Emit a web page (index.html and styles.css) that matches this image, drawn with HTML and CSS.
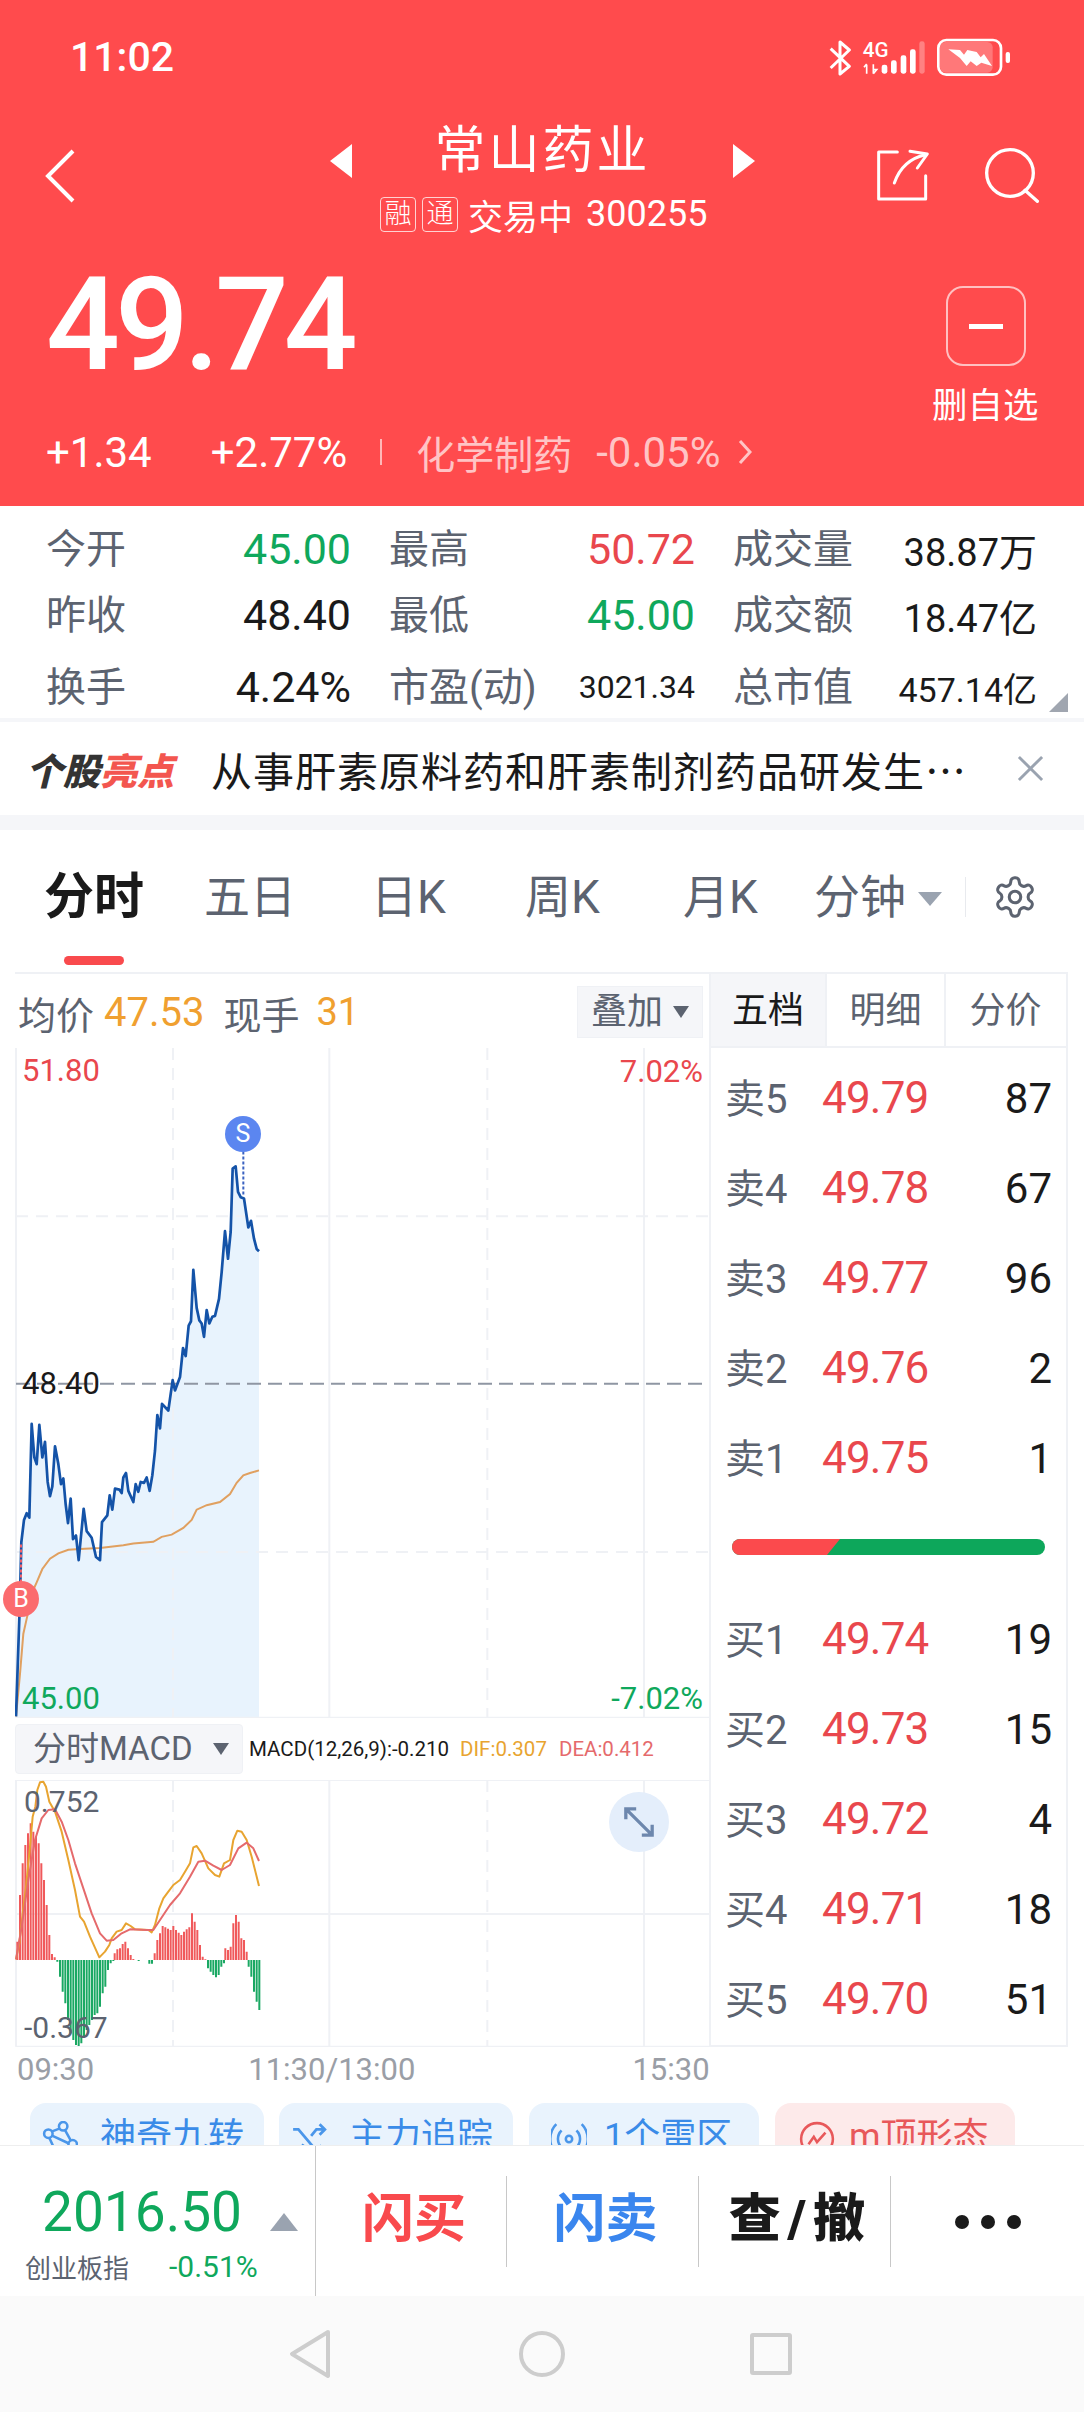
FILE: index.html
```html
<!DOCTYPE html>
<html lang="zh-CN">
<head>
	<meta charset="UTF-8">
	<title>常山药业</title>
	<link rel="stylesheet" href="styles.css">
</head>
<body>
	<div class="page">
		<div class="header">
			<div class="status">
				<span class="clock">11:02</span>
				<svg class="status-icons" viewBox="207 48 543 114">
					<path d="M212 80 L268 133 L240 156 V60 L268 84 L212 138" fill="none" stroke="#fff" stroke-width="9" stroke-linejoin="round"/>
					<text x="308" y="104" class="net">4G</text>
					<path d="M320 128 V155 M312 136 L320 126 M340 127 V155 M340 155 L350 143 H340" fill="none" stroke="#fff" stroke-width="5"/>
					<g fill="#fff">
						<rect x="365" y="128" width="17" height="27" rx="7"/>
						<rect x="393" y="115" width="17" height="40" rx="7"/>
						<rect x="422" y="100" width="17" height="55" rx="7"/>
						<rect x="450" y="82" width="17" height="73" rx="7"/>
						<rect x="478" y="58" width="16" height="97" rx="7" opacity=".3"/>
						<rect x="540" y="60" width="158" height="92" rx="16" opacity=".25"/>
						<rect x="737" y="90" width="13" height="33" rx="6"/>
						<path d="M565 82 L600 84 L612 98 L622 84 L650 90 L662 106 L672 96 L696 132 L664 122 L650 132 L632 118 L620 132 L600 108 Z"/>
					</g>
					<rect x="535" y="54" width="188" height="104" rx="24" fill="none" stroke="#fff" stroke-width="8"/>
				</svg>
			</div>
			<div class="nav">
				<svg class="back" viewBox="0 0 30 54"><path d="M28 2 L3 27 L28 52" fill="none" stroke="#fff" stroke-width="4"/></svg>
				<div class="nav-mid">
					<div class="title-row">
						<i class="arrow-left"></i>
						<span class="title">常山药业</span>
						<i class="arrow-right"></i>
					</div>
					<div class="sub-row">
						<span class="tag">融</span>
						<span class="tag">通</span>
						<span class="sub-state">交易中</span>
						<span class="sub-code">300255</span>
					</div>
				</div>
				<svg class="actions" viewBox="345 385 495 165">
					<g fill="none" stroke="#fff" stroke-width="9" stroke-linecap="round" stroke-linejoin="round">
						<path d="M412 397 H356 V538 H497 V468"/>
						<path d="M403 490 C420 440 450 415 497 405"/>
						<path d="M450 395 L502 403 L472 445"/>
						<circle cx="750" cy="460" r="70" stroke-width="10"/>
						<path d="M795 512 L832 545" stroke-width="10"/>
					</g>
				</svg>
			</div>
			<div class="quote">
				<div class="quote-left">
					<div class="price">49.74</div>
					<div class="change-row">
						<span>+1.34</span>
						<span class="pct">+2.77%</span>
						<i class="bar"></i>
						<span class="sector">化学制药</span>
						<span class="sector-pct">-0.05%</span>
						<svg class="more" viewBox="0 0 14 26"><path d="M2 2 L12 13 L2 24" fill="none" stroke="#ffc4c5" stroke-width="3"/></svg>
					</div>
				</div>
				<div class="quote-right">
					<div class="fav"><i></i></div>
					<div class="fav-label">删自选</div>
				</div>
			</div>
		</div>

		<div class="stats">
			<div class="stat-row">
				<span class="k">今开</span><span class="v green">45.00</span>
				<span class="k">最高</span><span class="v red">50.72</span>
				<span class="k">成交量</span><span class="v size38">38.87万</span>
			</div>
			<div class="stat-row">
				<span class="k">昨收</span><span class="v">48.40</span>
				<span class="k">最低</span><span class="v green">45.00</span>
				<span class="k">成交额</span><span class="v size38">18.47亿</span>
			</div>
			<div class="stat-row stat-last">
				<span class="k">换手</span><span class="v">4.24%</span>
				<span class="k">市盈(动)</span><span class="v size32">3021.34</span>
				<span class="k">总市值</span><span class="v size34">457.14亿</span>
			</div>
			<i class="corner"></i>
		</div>

		<div class="notice">
			<span class="notice-logo">个股<b>亮点</b></span>
			<span class="notice-text">从事肝素原料药和肝素制剂药品研发生…</span>
			<svg class="notice-close" viewBox="0 0 28 28"><path d="M2 2 L26 26 M26 2 L2 26" stroke="#9aa3b0" stroke-width="3"/></svg>
		</div>

		<div class="tabs">
			<div class="tab-row">
				<span class="tab on">分时</span>
				<span class="tab">五日</span>
				<span class="tab">日K</span>
				<span class="tab">周K</span>
				<span class="tab">月K</span>
				<span class="tab tab-min">分钟<i class="tri"></i></span>
				<i class="tab-sep"></i>
				<svg class="gear" viewBox="0 0 24 24" fill="none" stroke="#5c6370" stroke-width="1.6">
					<path d="M12.22 2h-.44a2 2 0 0 0-2 2v.18a2 2 0 0 1-1 1.73l-.43.25a2 2 0 0 1-2 0l-.15-.08a2 2 0 0 0-2.73.73l-.22.38a2 2 0 0 0 .73 2.73l.15.1a2 2 0 0 1 1 1.72v.51a2 2 0 0 1-1 1.74l-.15.09a2 2 0 0 0-.73 2.73l.22.38a2 2 0 0 0 2.73.73l.15-.08a2 2 0 0 1 2 0l.43.25a2 2 0 0 1 1 1.73V20a2 2 0 0 0 2 2h.44a2 2 0 0 0 2-2v-.18a2 2 0 0 1 1-1.73l.43-.25a2 2 0 0 1 2 0l.15.08a2 2 0 0 0 2.73-.73l.22-.39a2 2 0 0 0-.73-2.73l-.15-.08a2 2 0 0 1-1-1.74v-.5a2 2 0 0 1 1-1.74l.15-.09a2 2 0 0 0 .73-2.73l-.22-.38a2 2 0 0 0-2.73-.73l-.15.08a2 2 0 0 1-2 0l-.43-.25a2 2 0 0 1-1-1.73V4a2 2 0 0 0-2-2z"/>
					<circle cx="12" cy="12" r="3"/>
				</svg>
			</div>
			<div class="tab-line"></div>
		</div>

		<div class="market">
			<div class="left-col">
				<div class="chart-head">
					<span class="gray">均价</span><span class="orange avg">47.53</span>
					<span class="gray now">现手</span><span class="orange lot">31</span>
					<span class="overlay">叠加<i class="tri-dark"></i></span>
				</div>
				<div class="price-chart">
					<svg viewBox="45 17.92 2082 1500.8" preserveAspectRatio="none">
						<polygon class="area" points="48,1515 60,1250 64,1125 72,1075 80,1060 88,1070 95,860 103,935 110,950 118,862 127,935 135,900 143,990 150,1022 157,1000 165,910 175,950 183,995 190,982 197,1040 204,1082 212,1027 219,1118 228,1110 236,1165 251,1050 260,1100 275,1115 288,1158 300,1165 306,1080 322,1065 329,1020 337,1052 345,1005 358,1007 365,1015 370,980 378,970 385,1010 400,1035 407,995 415,1012 422,990 432,992 440,980 449,1010 457,975 465,920 472,840 480,870 486,815 505,830 518,762 525,785 540,755 549,690 557,708 566,640 573,630 580,515 590,600 598,628 605,635 612,665 620,605 628,635 637,620 645,618 657,580 665,520 675,428 684,490 692,430 698,288 707,283 714,340 722,352 732,355 745,420 753,405 762,445 770,468 777,473 777,1518 48,1518"/>
						<g class="grid">
							<path d="M48 18 V1518 M48 1518 H2127 M988 18 V1518 M1932 18 V1518"/>
							<path class="dash" d="M519 18 V1518 M1462 18 V1518 M48 395 H2127 M48 1147 H2127"/>
						</g>
						<path class="mid" d="M48 770 H2127"/>
						<polyline class="avg-line" points="48,1515 60,1420 70,1330 82,1290 95,1240 110,1215 127,1185 150,1162 175,1150 205,1142 240,1140 300,1138 370,1132 400,1128 460,1124 485,1113 515,1108 550,1093 575,1075 590,1052 620,1042 660,1035 690,1017 710,992 730,975 750,970 777,964"/>
						<polyline class="price-line" points="48,1515 60,1250 64,1125 72,1075 80,1060 88,1070 95,860 103,935 110,950 118,862 127,935 135,900 143,990 150,1022 157,1000 165,910 175,950 183,995 190,982 197,1040 204,1082 212,1027 219,1118 228,1110 236,1165 251,1050 260,1100 275,1115 288,1158 300,1165 306,1080 322,1065 329,1020 337,1052 345,1005 358,1007 365,1015 370,980 378,970 385,1010 400,1035 407,995 415,1012 422,990 432,992 440,980 449,1010 457,975 465,920 472,840 480,870 486,815 505,830 518,762 525,785 540,755 549,690 557,708 566,640 573,630 580,515 590,600 598,628 605,635 612,665 620,605 628,635 637,620 645,618 657,580 665,520 675,428 684,490 692,430 698,288 707,283 714,340 722,352 732,355 745,420 753,405 762,445 770,468 777,473"/>
						<path class="dot-red" d="M63 1130 V1215"/>
						<path class="dot-blue" d="M730 250 V350"/>
					</svg>
					<span class="axis tl red">51.80</span>
					<span class="axis tr red">7.02%</span>
					<span class="axis ml">48.40</span>
					<span class="axis bl green">45.00</span>
					<span class="axis br green">-7.02%</span>
					<span class="mark mark-b">B</span>
					<span class="mark mark-s">S</span>
				</div>
				<div class="macd-head">
					<span class="macd-btn">分时MACD<i class="tri-dark"></i></span>
					<span class="macd-val">MACD(12,26,9):-0.210</span>
					<span class="macd-val dif">DIF:0.307</span>
					<span class="macd-val dea">DEA:0.412</span>
				</div>
				<div class="macd-chart">
					<svg viewBox="45 240 2082 801">
						<g class="grid3">
							<path d="M48 240 V1040 M48 240 H2127 M48 642 H2127 M48 1040 H2127 M988 240 V1040 M1932 240 V1040"/>
							<path class="dash3" d="M519 240 V1040 M1462 240 V1040"/>
						</g>
						<path class="bars-red" d="M52 780V725M60 780V585M68 780V490M76 780V435M84 780V400M92 780V370M100 780V395M108 780V410M116 780V430M124 780V490M132 780V540M140 780V615M148 780V705M156 780V762M164 780V772M344 780V760M352 780V748M360 780V745M368 780V732M376 780V725M384 780V745M392 780V765M400 780V777M464 780V760M472 780V720M480 780V700M488 780V678M496 780V682M504 780V686M512 780V690M520 780V678M528 780V690M536 780V698M544 780V705M552 780V695M560 780V688M568 780V682M576 780V640M584 780V665M592 780V690M600 780V735M608 780V770M616 780V778M676 780V745M684 780V750M692 780V740M700 780V670M708 780V645M716 780V665M724 780V715M732 780V720M740 780V755"/>
						<path class="bars-green" d="M172 780V785M180 780V830M188 780V875M196 780V910M204 780V960M212 780V1000M220 780V1020M228 780V1035M236 780V1038M244 780V1030M252 780V1010M260 780V990M268 780V975M276 780V960M284 780V945M292 780V940M300 780V920M308 780V880M316 780V860M324 780V810M332 780V790M340 780V783M416 780V783M448 780V791M456 780V791M624 780V805M632 780V815M640 780V825M648 780V832M656 780V825M664 780V800M672 780V790M746 780V800M754 780V830M762 780V875M770 780V905M778 780V930"/>
						<polyline class="dif-line" points="48,778 58,730 68,640 78,560 90,440 98,350 106,320 112,270 120,247 130,245 138,260 148,305 165,335 185,395 205,480 225,570 240,650 252,665 270,710 298,772 315,755 328,735 335,715 350,695 365,690 378,670 392,678 405,688 445,690 455,697 465,675 478,625 490,595 505,575 520,555 540,540 555,515 570,490 580,442 590,438 605,460 625,505 645,525 658,530 672,490 690,480 700,420 712,392 725,395 740,420 755,470 777,558"/>
						<polyline class="dea-line" points="48,778 65,680 85,540 105,420 125,355 145,330 165,328 185,365 205,420 225,490 250,565 275,640 300,700 320,722 340,720 365,700 390,688 440,690 460,690 480,660 510,615 540,580 570,530 595,485 615,482 640,497 665,510 690,495 715,445 740,428 760,445 777,483"/>
					</svg>
					<span class="macd-top">0.752</span>
					<span class="macd-low">-0.367</span>
					<span class="expand">
						<svg viewBox="0 0 34 34"><path d="M3 14 V3 H14 M3 3 L31 31 M31 20 V31 H20" fill="none" stroke="#6d87ad" stroke-width="3.5"/></svg>
					</span>
				</div>
			</div>
			<div class="book">
				<div class="book-tabs">
					<span class="book-tab on">五档</span>
					<span class="book-tab">明细</span>
					<span class="book-tab">分价</span>
				</div>
				<div class="book-row"><span class="lv">卖5</span><span class="bp">49.79</span><span class="bq">87</span></div>
				<div class="book-row"><span class="lv">卖4</span><span class="bp">49.78</span><span class="bq">67</span></div>
				<div class="book-row"><span class="lv">卖3</span><span class="bp">49.77</span><span class="bq">96</span></div>
				<div class="book-row"><span class="lv">卖2</span><span class="bp">49.76</span><span class="bq">2</span></div>
				<div class="book-row"><span class="lv">卖1</span><span class="bp">49.75</span><span class="bq">1</span></div>
				<div class="ratio"><svg viewBox="0 0 313 16"><rect width="313" height="16" rx="8" fill="#0da75b"/><path d="M8 0 H108 L95 16 H8 A8 8 0 0 1 8 0 Z" fill="#fb4a4d"/></svg></div>
				<div class="book-row"><span class="lv">买1</span><span class="bp">49.74</span><span class="bq">19</span></div>
				<div class="book-row"><span class="lv">买2</span><span class="bp">49.73</span><span class="bq">15</span></div>
				<div class="book-row"><span class="lv">买3</span><span class="bp">49.72</span><span class="bq">4</span></div>
				<div class="book-row"><span class="lv">买4</span><span class="bp">49.71</span><span class="bq">18</span></div>
				<div class="book-row"><span class="lv">买5</span><span class="bp">49.70</span><span class="bq">51</span></div>
			</div>
		</div>

		<div class="times">
			<span>09:30</span>
			<span class="t-mid">11:30/13:00</span>
			<span class="t-end">15:30</span>
		</div>

		<div class="chips">
			<div class="chip chip1">
				<svg viewBox="0 0 34 34" fill="none" stroke="#4a96ea" stroke-width="2.4"><circle cx="6" cy="12" r="4"/><circle cx="20" cy="5" r="4"/><circle cx="29" cy="22" r="4"/><circle cx="14" cy="30" r="3"/><path d="M9 10 L17 7 M22 9 L27 18 M7 16 L12 27 M10 14 L25 21"/></svg>
				<span>神奇九转</span>
			</div>
			<div class="chip chip2">
				<svg viewBox="0 0 34 34" fill="none" stroke="#4a96ea" stroke-width="2.6"><path d="M2 8 H7 L24 28 H31 M2 28 H7 L12 22 M19 14 L24 8 H31 M27 3 L32 8 L27 13 M27 23 L32 28 L27 33"/></svg>
				<span>主力追踪</span>
			</div>
			<div class="chip chip3">
				<svg viewBox="0 0 34 34" fill="none" stroke="#4a96ea" stroke-width="2.4"><circle cx="17" cy="17" r="3"/><path d="M10 9 A11 11 0 0 0 10 25 M24 9 A11 11 0 0 1 24 25 M5 3 A20 20 0 0 0 5 31 M29 3 A20 20 0 0 1 29 31"/></svg>
				<span>1个雷区</span>
			</div>
			<div class="chip chip4">
				<svg viewBox="0 0 34 34" fill="none" stroke="#e8585a" stroke-width="2.4"><circle cx="17" cy="17" r="15"/><path d="M9 22 L14 15 L17 20 L25 11"/></svg>
				<span>m顶形态</span>
			</div>
		</div>

		<div class="bottom">
			<div class="index">
				<div class="index-top"><span class="index-num">2016.50</span><i class="index-tri"></i></div>
				<div class="index-sub"><span class="index-name">创业板指</span><span class="index-pct">-0.51%</span></div>
			</div>
			<div class="btns">
				<span class="btn btn-buy">闪买</span>
				<span class="btn btn-sell">闪卖</span>
				<span class="btn btn-query">查/撤</span>
				<span class="btn btn-more"><i></i><i></i><i></i></span>
			</div>
		</div>

		<div class="sysnav">
			<svg class="sys-back" viewBox="0 0 44 50"><path d="M40 3 L4 25 L40 47 Z" fill="none" stroke="#cdcdcd" stroke-width="4" stroke-linejoin="round"/></svg>
			<i class="sys-home"></i>
			<i class="sys-recent"></i>
		</div>
	</div>
</body>
</html>
```

FILE: styles.css
```css
*{
	padding: 0;
	margin: 0;
	box-sizing: border-box;
}
i{
	font-style: normal;
	display: block;
}
svg{
	display: block;
}
body{
	width: 1084px;
	background: #fff;
	font-family: Roboto, "Noto Sans CJK SC", sans-serif;
	color: #1a1a1a;
	overflow-x: hidden;
}
.page{
	width: 1084px;
	height: 2412px;
	overflow: hidden;
}
.red{ color: #e9474d; }
.green{ color: #0fa85c; }
.gray{ color: #5c6370; }
.orange{ color: #f0a030; }

/* header */
.header{
	height: 506px;
	background: #ff4b4d;
	color: #fff;
}
.status{
	height: 114px;
	padding: 0 74px 0 70px;
	display: flex;
	align-items: center;
	justify-content: space-between;
}
.clock{
	font-size: 41px;
	font-weight: 500;
}
.status-icons{
	width: 181px;
	height: 38px;
}
.net{
	font-family: Roboto, sans-serif;
	font-size: 62px;
	font-weight: 500;
	fill: #fff;
}
.nav{
	height: 138px;
	display: flex;
	padding: 0 44px 0 45px;
}
.back{
	width: 30px;
	height: 54px;
	margin-top: 35px;
}
.nav-mid{
	width: 425px;
	margin-left: 255px;
}
.title-row{
	height: 68px;
	display: flex;
	justify-content: space-between;
}
.title{
	font-size: 51px;
	line-height: 74px;
	letter-spacing: 3px;
}
.arrow-left, .arrow-right{
	width: 0;
	height: 0;
	margin-top: 30px;
	border-top: 17px solid transparent;
	border-bottom: 17px solid transparent;
}
.arrow-left{ border-right: 22px solid #fff; }
.arrow-right{ border-left: 22px solid #fff; }
.sub-row{
	height: 64px;
	display: flex;
	align-items: center;
	margin-left: 50px;
}
.tag{
	width: 36px;
	height: 35px;
	margin-right: 6px;
	border: 1px solid rgba(255,255,255,.75);
	border-radius: 4px;
	font-size: 27px;
	line-height: 32px;
	text-align: center;
	font-weight: 300;
}
.sub-state{
	font-size: 35px;
	margin-left: 4px;
}
.sub-code{
	font-size: 36px;
	margin-left: 13px;
}
.actions{
	width: 165px;
	height: 55px;
	margin-top: 34px;
	margin-left: auto;
}
.quote{
	height: 254px;
	display: flex;
	justify-content: space-between;
	padding: 0 45px 0 46px;
}
.price{
	height: 140px;
	font-size: 130px;
	font-weight: 500;
	line-height: 146px;
	letter-spacing: -5px;
}
.change-row{
	margin-top: 30px;
	height: 60px;
	display: flex;
	align-items: center;
	font-size: 42px;
}
.pct{ margin-left: 59px; }
.bar{
	width: 2px;
	height: 26px;
	margin-left: 33px;
	background: rgba(255,255,255,.6);
}
.sector{
	margin-left: 34px;
	font-size: 39px;
	color: #ffc4c5;
}
.sector-pct{
	margin-left: 24px;
	color: #ffc4c5;
}
.more{
	width: 14px;
	height: 26px;
	margin-left: 18px;
}
.quote-right{
	width: 107px;
	padding-top: 34px;
}
.fav{
	width: 80px;
	height: 80px;
	margin: 0 auto;
	border: 2px solid rgba(255,255,255,.65);
	border-radius: 17px;
	display: flex;
	align-items: center;
	justify-content: center;
}
.fav i{
	width: 34px;
	height: 5px;
	background: #fff;
}
.fav-label{
	margin-top: 20px;
	font-size: 35.5px;
	line-height: 40px;
	white-space: nowrap;
}

/* stats */
.stats{
	position: relative;
	height: 212px;
	padding-top: 10px;
}
.stat-row{
	height: 66px;
	padding: 0 47px 0 46px;
	display: grid;
	grid-template-columns: 120px 185px 190px 154px 162px 180px;
	align-items: center;
}
.stat-last{
	margin-top: 8px;
	height: 62px;
}
.k{
	font-size: 40px;
	color: #5c6370;
	white-space: nowrap;
	line-height: 50px;
	margin-top: 2px;
}
.k:nth-child(3), .k:nth-child(5){
	padding-left: 38px;
}
.v{
	font-size: 43px;
	text-align: right;
	white-space: nowrap;
}
.size38{ font-size: 38px; }
.size34{ font-size: 34px; }
.size32{ font-size: 32px; }
.corner{
	position: absolute;
	right: 16px;
	bottom: 6px;
	width: 0;
	height: 0;
	border-left: 19px solid transparent;
	border-bottom: 19px solid #a0a6b0;
}
.notice{
	height: 97px;
	border-top: 4px solid #f5f6f9;
	padding: 0 40px 0 26px;
	display: flex;
	align-items: center;
}
.notice-logo{
	width: 185px;
	font-size: 37px;
	font-weight: 900;
	font-style: italic;
	color: #333;
}
.notice-logo b{
	color: #f3564f;
	font-weight: 900;
}
.notice-text{
	font-family: "Noto Sans CJK SC", sans-serif;
	font-size: 41px;
	letter-spacing: 1px;
	white-space: nowrap;
	width: 806px;
	color: #1a1a1a;
}
.notice-close{
	width: 27px;
	height: 27px;
}

/* period tabs */
.tabs{
	border-top: 15px solid #f5f6f9;
	height: 157px;
	padding-top: 42px;
}
.tab-row{
	height: 50px;
	padding-left: 44px;
	display: grid;
	grid-template-columns: 160px 167px 154px 158px 131px 151px 1px 44px;
	align-items: center;
}
.tab{
	font-size: 46px;
	color: #5c6370;
	line-height: 50px;
	white-space: nowrap;
}
.tab.on{
	font-size: 50px;
	font-weight: 700;
	color: #1a1a1a;
}
.tab-min{
	display: flex;
	align-items: center;
}
.tri{
	width: 0;
	height: 0;
	margin: 4px 0 0 12px;
	border-left: 12px solid transparent;
	border-right: 12px solid transparent;
	border-top: 14px solid #9aa3b0;
}
.tab-sep{
	width: 1px;
	height: 40px;
	background: #e8eaee;
}
.gear{
	width: 46px;
	height: 46px;
	margin-left: 26px;
}
.tab-line{
	width: 60px;
	height: 9px;
	margin: 34px 0 0 64px;
	border-radius: 5px;
	background: #f94a4d;
}

/* chart + order book */
.market{
	display: flex;
	margin: 0 16px 0 15px;
	height: 1075px;
}
.left-col{
	width: 694px;
}
.chart-head{
	height: 76px;
	border-top: 2px solid #eff1f5;
	display: flex;
	align-items: center;
	padding: 2px 0 0 3px;
	font-size: 38px;
}
.avg{ margin-left: 10px; font-size: 40px; }
.now{ margin-left: 19px; }
.lot{ margin-left: 17px; font-size: 38px; }
.overlay{
	margin-left: auto;
	margin-right: 6px;
	width: 126px;
	height: 52px;
	padding-left: 13px;
	background: #f5f6f9;
	border: 1px solid #eff1f5;
	color: #5c6370;
	font-size: 36px;
	line-height: 50px;
	display: flex;
	align-items: center;
}
.tri-dark{
	width: 0;
	height: 0;
	margin-left: 10px;
	border-left: 8px solid transparent;
	border-right: 8px solid transparent;
	border-top: 12px solid #5c6370;
}
.price-chart{
	position: relative;
	height: 670px;
}
.price-chart svg{
	width: 694px;
	height: 670px;
}
.area{ fill: #e8f3fd; }
.grid path{
	fill: none;
	stroke: #eff1f5;
	stroke-width: 2;
	vector-effect: non-scaling-stroke;
}
.grid .dash{ stroke-dasharray: 12 8; }
.mid{
	fill: none;
	stroke: #8f96a3;
	stroke-width: 2;
	stroke-dasharray: 14 7;
	vector-effect: non-scaling-stroke;
}
.avg-line{
	fill: none;
	stroke: #e0a060;
	stroke-width: 2;
	vector-effect: non-scaling-stroke;
}
.price-line{
	fill: none;
	stroke: #1453a8;
	stroke-width: 2.7;
	stroke-linejoin: round;
	vector-effect: non-scaling-stroke;
}
.dot-red, .dot-blue{
	fill: none;
	stroke-width: 2;
	stroke-dasharray: 3 2;
	vector-effect: non-scaling-stroke;
}
.dot-red{ stroke: #f0606a; }
.dot-blue{ stroke: #3a62c0; }
.axis{
	position: absolute;
	font-size: 31px;
	line-height: 36px;
}
.tl{ left: 7px; top: 5px; }
.tr{ right: 6px; top: 6px; }
.ml{ left: 7px; top: 318px; }
.bl{ left: 7px; top: 633px; }
.br{ right: 6px; top: 633px; }
.mark{
	position: absolute;
	width: 36px;
	height: 36px;
	border-radius: 50%;
	color: #fff;
	font-size: 25px;
	line-height: 36px;
	text-align: center;
}
.mark-b{ left: -12px; top: 533px; background: #fb6b6e; }
.mark-s{ left: 210px; top: 68px; background: #5b86f0; }
.macd-head{
	height: 62px;
	display: flex;
	align-items: center;
}
.macd-btn{
	width: 228px;
	height: 50px;
	padding-left: 17px;
	background: #f5f6f9;
	border: 1px solid #eff1f5;
	border-radius: 4px;
	color: #5c6370;
	font-size: 33px;
	line-height: 48px;
	display: flex;
	align-items: center;
	white-space: nowrap;
}
.macd-btn .tri-dark{ margin-left: 20px; }
.macd-val{
	font-size: 20.5px;
	margin-left: 6px;
	white-space: nowrap;
}
.dif{ color: #e8a430; margin-left: 11px; }
.dea{ color: #e56a6c; margin-left: 12px; }
.macd-chart{
	position: relative;
	height: 267px;
}
.macd-chart svg{
	width: 694px;
	height: 267px;
}
.grid3 path{
	fill: none;
	stroke: #eff1f5;
	stroke-width: 6;
}
.grid3 .dash3{ stroke-dasharray: 36 24; }
.bars-red, .bars-green{
	fill: none;
	stroke-width: 6;
}
.bars-red{ stroke: #f0595b; }
.bars-green{ stroke: #1aa863; }
.dif-line, .dea-line{
	fill: none;
	stroke-width: 6;
	stroke-linejoin: round;
}
.dif-line{ stroke: #e8a430; }
.dea-line{ stroke: #e56a6c; }
.macd-top, .macd-low{
	position: absolute;
	left: 9px;
	font-size: 30px;
	line-height: 36px;
	color: #5c6370;
}
.macd-top{ top: 4px; }
.macd-low{ top: 230px; }
.expand{
	position: absolute;
	left: 594px;
	top: 12px;
	width: 60px;
	height: 60px;
	border-radius: 50%;
	background: #e4eefb;
	padding: 14px;
}
.expand svg{
	width: 32px;
	height: 32px;
}
.book{
	width: 359px;
	height: 1075px;
	border: 2px solid #eff1f5;
}
.book-tabs{
	height: 74px;
	display: flex;
	border-bottom: 2px solid #eff1f5;
}
.book-tab{
	width: 119px;
	font-size: 36px;
	line-height: 75px;
	text-align: center;
	color: #5c6370;
	border-right: 2px solid #eff1f5;
}
.book-tab.on{
	width: 116px;
	background: #f5f6f9;
	color: #1a1a1a;
}
.book-tab:last-child{ border-right: 0; }
.book-row{
	height: 90px;
	padding: 0 14px;
	display: flex;
	align-items: center;
}
.book-row:nth-child(2){ margin-top: 5px; }
.lv{
	width: 97px;
	font-size: 40px;
	color: #5c6370;
	white-space: nowrap;
	margin-bottom: 4px;
}
.bp{
	width: 108px;
	font-size: 44px;
	letter-spacing: -.8px;
	color: #e9474d;
}
.bq{
	flex: 1;
	font-size: 42px;
	text-align: right;
}
.ratio{
	height: 91px;
	padding: 36px 0 0 21px;
}
.ratio svg{
	width: 313px;
	height: 16px;
}
.times{
	height: 44px;
	padding-left: 17px;
	display: flex;
	align-items: center;
	font-size: 31px;
	color: #9a9ea6;
}
.t-mid{ margin-left: 154px; }
.t-end{ margin-left: 217px; }

/* signal chips, cut off by the bottom bar */
.chips{
	height: 54px;
	padding: 12px 0 0 30px;
	display: flex;
	overflow: hidden;
}
.chip{
	width: 234px;
	height: 80px;
	flex: none;
	margin-right: 15px;
	border-radius: 16px;
	background: #e9f3fd;
	color: #3a8be8;
	font-size: 36px;
	line-height: 44px;
	padding: 12px 0 0 12px;
	display: flex;
	align-items: flex-start;
	white-space: nowrap;
}
.chip svg{
	width: 36px;
	height: 36px;
	margin: 6px 22px 0 0;
	flex: none;
}
.chip2{ margin-right: 16px; }
.chip3{ width: 230px; padding-left: 22px; margin-right: 16px; }
.chip3 svg{ margin-right: 17px; }
.chip4{
	width: 240px;
	background: #fdeaea;
	color: #e8585a;
	padding-left: 24px;
}
.chip4 svg{ margin-right: 14px; }

/* bottom bar */
.bottom{
	height: 151px;
	border-top: 1px solid #eeeeee;
	display: flex;
	background: #fff;
}
.index{
	width: 316px;
	border-right: 1px solid #c8c8c8;
	padding-left: 25px;
}
.index-top{
	height: 95px;
	padding: 31px 0 0 17px;
	display: flex;
}
.index-num{
	font-size: 55px;
	line-height: 70px;
	color: #0fa85c;
}
.index-tri{
	width: 0;
	height: 0;
	margin: 36px 0 0 28px;
	border-left: 14px solid transparent;
	border-right: 14px solid transparent;
	border-bottom: 18px solid #9aa3b0;
}
.index-sub{
	margin-top: 7px;
	display: flex;
	align-items: center;
}
.index-name{
	width: 144px;
	font-size: 26px;
	color: #5c6370;
}
.index-pct{
	font-size: 30px;
	color: #0fa85c;
}
.btns{
	flex: 1;
	display: grid;
	grid-template-columns: 191px 192px 192px 1fr;
	height: 91px;
	margin-top: 30px;
}
.btn{
	font-size: 52px;
	font-weight: 700;
	line-height: 88px;
	padding-left: 6px;
	text-align: center;
	border-right: 1px solid #c8c8c8;
	white-space: nowrap;
}
.btn-buy{ color: #f94a4d; }
.btn-sell{ color: #3a86ee; }
.btn-query{
	font-weight: 900;
	letter-spacing: 7px;
	padding-left: 12px;
}
.btn-more{
	border-right: 0;
	padding-left: 0;
	display: flex;
	align-items: center;
	justify-content: center;
	gap: 12px;
}
.btn-more i{
	width: 14px;
	height: 14px;
	border-radius: 50%;
	background: #1a1a1a;
}
.sysnav{
	height: 116px;
	background: #fafafa;
	display: flex;
	align-items: center;
	padding-left: 288px;
}
.sys-back{
	width: 44px;
	height: 50px;
}
.sys-home{
	width: 46px;
	height: 46px;
	margin-left: 187px;
	border: 4px solid #cdcdcd;
	border-radius: 50%;
}
.sys-recent{
	width: 42px;
	height: 42px;
	margin-left: 185px;
	border: 4px solid #cdcdcd;
	border-radius: 3px;
}
```
